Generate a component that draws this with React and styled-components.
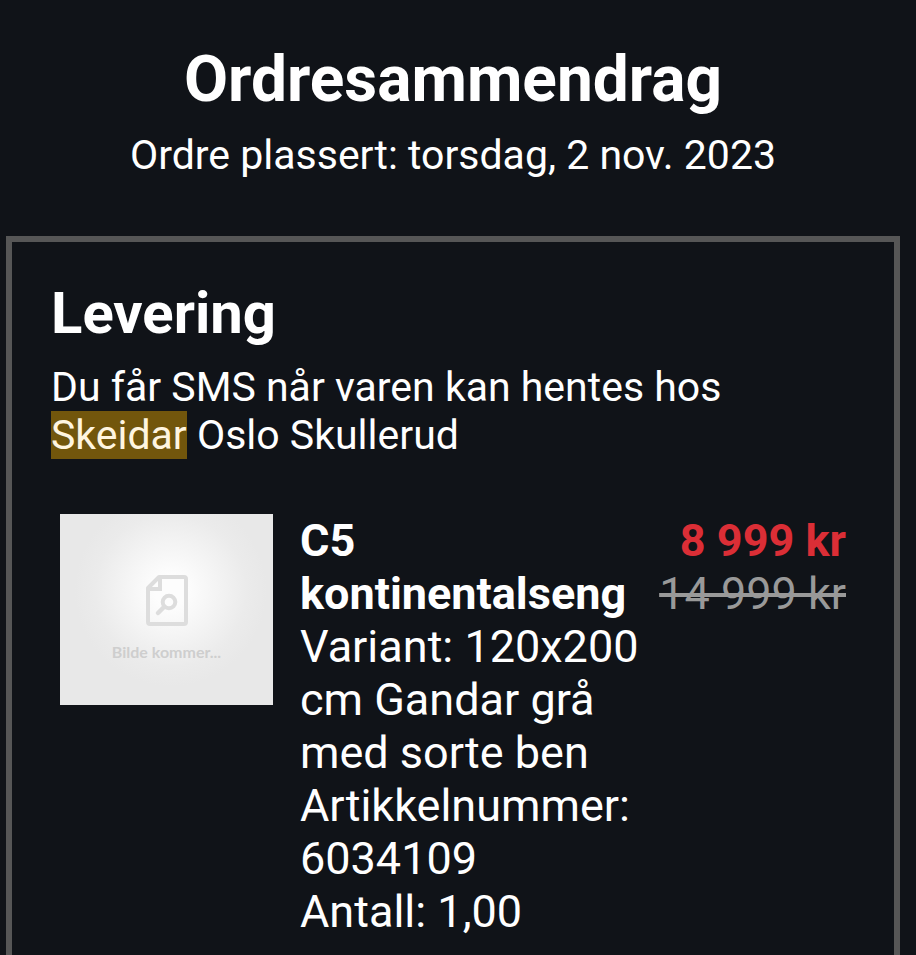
import React from 'react';
import styled, { createGlobalStyle } from 'styled-components';

const App = () => {
  return (
    <>
      <GlobalStyle />
      <Page>
        <Header>
          <h1>Ordresammendrag</h1>
          <p>Ordre plassert: torsdag, 2 nov. 2023</p>
        </Header>
        <Delivery>
          <DeliveryTitle>Levering</DeliveryTitle>
          <DeliveryText>
            Du får SMS når varen kan hentes hos <Highlight>Skeidar</Highlight> Oslo Skullerud
          </DeliveryText>
          <OrderLine>
            <Thumbnail>
              <svg width='42' height='51' viewBox='0 0 42 51' fill='none' stroke='#dddddd' strokeWidth='4' aria-hidden='true'>
                <path d='M13 2H38Q40 2 40 4V47Q40 49 38 49H4Q2 49 2 47V13Z' strokeLinejoin='round' />
                <path d='M14 4V14H4' />
                <circle cx='23' cy='27' r='6.3' />
                <path d='M18 32L12 38' strokeWidth='4.5' strokeLinecap='round' />
              </svg>
              <span>Bilde kommer...</span>
            </Thumbnail>
            <Details>
              <h3>C5 kontinentalseng</h3>
              <p>Variant: 120x200 cm Gandar grå med sorte ben</p>
              <p>Artikkelnummer: 6034109</p>
              <p>Antall: 1,00</p>
            </Details>
            <Prices>
              <strong>8 999 kr</strong>
              <del>14 999 kr</del>
            </Prices>
          </OrderLine>
        </Delivery>
      </Page>
    </>
  );
};

export default App;

const GlobalStyle = createGlobalStyle`
  body {
    margin: 0;
    background: #101318;
    color: #fff;
    font-family: Roboto, 'Liberation Sans', sans-serif;
  }

  h1, h2, h3, p {
    margin: 0;
  }
`;

const Page = styled.main`
  padding: 40px 16px 0 6px;
`;

const Header = styled.header`
  text-align: center;

  & h1 {
    font-size: 64px;
    line-height: 80px;
    font-weight: 700;
  }

  & p {
    margin-top: 11px;
    font-size: 41px;
    line-height: 48px;
  }
`;

const Delivery = styled.section`
  margin-top: 57px;
  padding: 39px 48px 40px 39px;
  border: 6px solid #565656;
`;

const DeliveryTitle = styled.h2`
  font-size: 58px;
  line-height: 64px;
  font-weight: 700;
`;

const DeliveryText = styled.p`
  margin-top: 18px;
  font-size: 41px;
  line-height: 48px;
`;

const Highlight = styled.mark`
  background: #72560c;
  color: #fff5e0;
`;

const OrderLine = styled.article`
  display: grid;
  grid-template-columns: 213px minmax(0, 1fr) auto;
  margin-top: 55px;
  padding-left: 9px;
  font-size: 45px;
  line-height: 53px;
`;

const Thumbnail = styled.div`
  display: flex;
  flex-direction: column;
  align-items: center;
  justify-content: flex-end;
  gap: 16px;
  box-sizing: border-box;
  height: 191px;
  padding-bottom: 43px;
  background: radial-gradient(circle at 52% 40%, #fdfdfd 16px, #f4f4f4 46px, #ebebeb 76px, #e8e8e8 96px);

  & span {
    color: #cecece;
    font-size: 16px;
    line-height: 20px;
    font-weight: 700;
    font-family: Lato, sans-serif;
  }
`;

const Details = styled.div`
  padding-left: 27px;

  & h3 {
    font-size: 45px;
    font-weight: 700;
  }
`;

const Prices = styled.div`
  display: flex;
  flex-direction: column;
  text-align: right;
  white-space: nowrap;

  & strong {
    color: #db2e36;
    font-weight: 700;
  }

  & del {
    color: #999;
  }
`;
